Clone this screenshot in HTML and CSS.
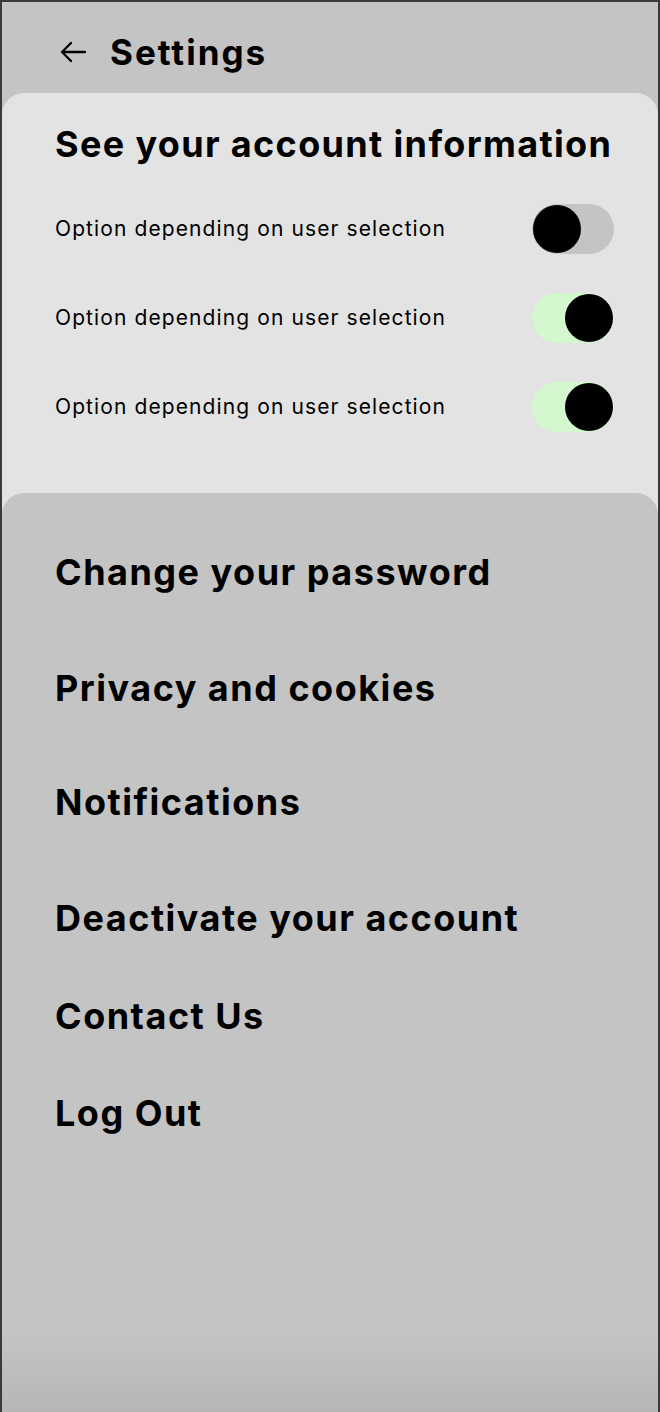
FILE: index.html
```html
<!DOCTYPE html>
<html>
<head>
<meta charset="utf-8">
<link rel="stylesheet" href="styles.css">
</head>
<body>
<div class="frame">
  <header class="topbar">
    <svg class="back" width="30" height="24" viewBox="0 0 30 24" fill="none" stroke="#000" stroke-width="2.3" stroke-linecap="round" stroke-linejoin="round">
      <path d="M27 12H4M13 3L4 12L13 21"/>
    </svg>
    <h1 class="title">Settings</h1>
  </header>
  <section class="card-info">
    <h2 class="info-title">See your account information</h2>
    <div class="option">
      <span class="option-label">Option depending on user selection</span>
      <span class="toggle off"><span class="knob"></span></span>
    </div>
    <div class="option">
      <span class="option-label">Option depending on user selection</span>
      <span class="toggle on"><span class="knob"></span></span>
    </div>
    <div class="option">
      <span class="option-label">Option depending on user selection</span>
      <span class="toggle on"><span class="knob"></span></span>
    </div>
  </section>
  <section class="card-menu">
    <div class="menu-item m1">Change your password</div>
    <div class="menu-item m2">Privacy and cookies</div>
    <div class="menu-item m3">Notifications</div>
    <div class="menu-item m4">Deactivate your account</div>
    <div class="menu-item m5">Contact Us</div>
    <div class="menu-item m6">Log Out</div>
  </section>
</div>
</body>
</html>
```
FILE: styles.css
```css
* { box-sizing: border-box; }
html, body { margin: 0; padding: 0; }
body {
  background: #3a3a3a;
  width: 660px;
  height: 1412px;
  overflow: hidden;
  font-family: Inter, "Noto Sans", sans-serif;
  color: #000;
}
.frame {
  margin: 2px 2px 0 2px;
  height: 1410px;
  background: #c4c4c4;
  display: flex;
  flex-direction: column;
}
.topbar {
  height: 91px;
  display: flex;
  align-items: center;
  padding-left: 56px;
  gap: 22px;
  padding-top: 8px;
}
.back { display: block; }
.title {
  margin: 0;
  font-size: 35px;
  font-weight: 700;
  letter-spacing: 2px;
}
.card-info {
  background: #e3e3e3;
  border-radius: 22px 22px 0 0;
  padding: 22px 44px 60px 53px;
  height: 430px;
}
.info-title {
  margin: 0 0 31px 0;
  font-size: 36px;
  font-weight: 700;
  line-height: 58px;
  letter-spacing: 1.35px;
}
.option {
  display: flex;
  align-items: center;
  justify-content: space-between;
  height: 89px;
  margin-top: -20px;
  margin-bottom: 20px;
}
.option-label { font-size: 21px; letter-spacing: 1.1px; }
.toggle {
  width: 82px;
  height: 50px;
  border-radius: 25px;
  display: flex;
  align-items: center;
  padding: 1px;
}
.toggle.off { background: #c4c4c4; justify-content: flex-start; }
.toggle.on { background: #d4f7d0; justify-content: flex-end; }
.knob {
  width: 48px;
  height: 48px;
  border-radius: 50%;
  background: #000;
}
.card-menu {
  flex: 1;
  background: linear-gradient(#c4c4c4 0, #c4c4c4 840px, #b6b6b6 100%);
  border-radius: 22px 22px 0 0;
  margin-top: -30px;
  padding: 50px 0 0 53px;
}
.menu-item {
  font-size: 36px;
  font-weight: 700;
  line-height: 58px;
  letter-spacing: 1.5px;
}
.m2 { margin-top: 58px; }
.m3 { margin-top: 56px; }
.m4 { margin-top: 58px; }
.m5 { margin-top: 40px; }
.m6 { margin-top: 39px; }
```
